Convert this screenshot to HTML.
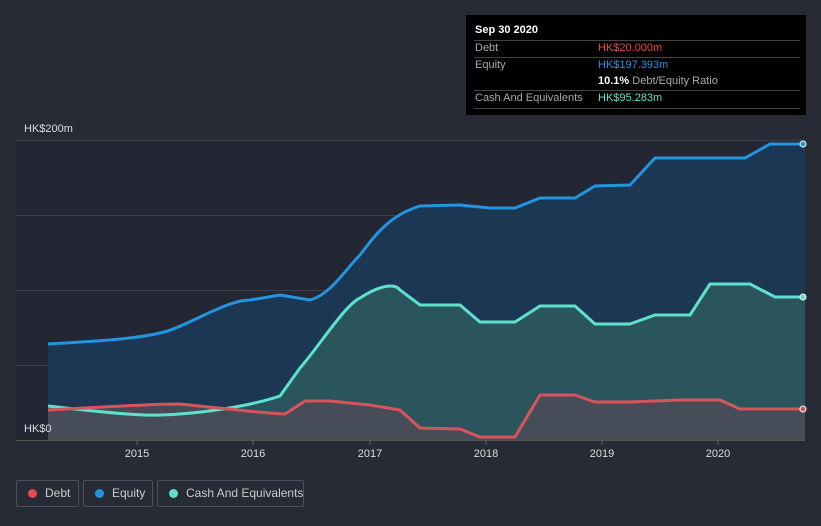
<!DOCTYPE html>
<html><head><style>
body{margin:0;width:821px;height:526px;background:#262b36;font-family:"Liberation Sans",sans-serif;overflow:hidden;position:relative}
.tt{position:absolute;left:466px;top:15px;width:340px;height:100px;background:#000;color:#fff;font-size:11px}
.tt .r{position:absolute;left:8px;right:6px;border-top:1px solid #444}
.lg{position:absolute;top:480px;height:27px;border:1px solid #4a505c;border-radius:2px;color:#ccc;font-size:12px;line-height:25px;box-sizing:border-box;white-space:nowrap}
.lg i{position:absolute;left:11px;top:8px;width:9px;height:9px;border-radius:50%}
</style></head><body>
<svg width="821" height="526" style="position:absolute;left:0;top:0">
<rect x="16" y="140" width="789" height="300" fill="#222733"/>
<g stroke="#3a404c" stroke-width="1">
<line x1="16" y1="140.5" x2="805" y2="140.5"/><line x1="16" y1="215.5" x2="805" y2="215.5"/><line x1="16" y1="290.5" x2="805" y2="290.5"/><line x1="16" y1="365.5" x2="805" y2="365.5"/><line x1="16" y1="440.5" x2="805" y2="440.5" stroke="#555"/>
</g>
<path d="M48,344 C80,342 130,340 160,333 C185,328 225,300 250,300 L280,295 L310,300 C330,295 345,270 360,255 C375,235 390,215 420,206 L460,205 L490,208 L515,208 L540,198 L575,198 L595,186 L630,185 L655,158 L745,158 L770,144 L805,144 L805,440 L48,440Z" fill="#1c3a56" opacity="0.9"/>
<path d="M48,406 C100,412 140,416 160,415 C200,414 250,406 280,396 L300,368 C320,345 345,305 360,298 C380,285 395,283 400,290 L420,305 L460,305 L480,322 L515,322 L540,306 L575,306 L595,324 L630,324 L655,315 L690,315 L710,284 L750,284 L775,297 L805,297 L805,440 L48,440Z" fill="#2d5a5f" opacity="0.85"/>
<path d="M48,410 C100,407 150,404 180,404 C220,408 260,413 285,414 L305,401 L330,401 L370,405 L400,410 L420,428 L460,429 L480,437 L515,437 L540,395 L575,395 L595,402 L630,402 L680,400 L720,400 L740,409 L805,409 L805,440 L48,440Z" fill="#4a4d58" opacity="0.9"/>
<path d="M48,344 C80,342 130,340 160,333 C185,328 225,300 250,300 L280,295 L310,300 C330,295 345,270 360,255 C375,235 390,215 420,206 L460,205 L490,208 L515,208 L540,198 L575,198 L595,186 L630,185 L655,158 L745,158 L770,144 L805,144" fill="none" stroke="#2394e0" stroke-width="3"/>
<path d="M48,406 C100,412 140,416 160,415 C200,414 250,406 280,396 L300,368 C320,345 345,305 360,298 C380,285 395,283 400,290 L420,305 L460,305 L480,322 L515,322 L540,306 L575,306 L595,324 L630,324 L655,315 L690,315 L710,284 L750,284 L775,297 L805,297" fill="none" stroke="#5ee0cc" stroke-width="3"/>
<path d="M48,410 C100,407 150,404 180,404 C220,408 260,413 285,414 L305,401 L330,401 L370,405 L400,410 L420,428 L460,429 L480,437 L515,437 L540,395 L575,395 L595,402 L630,402 L680,400 L720,400 L740,409 L805,409" fill="none" stroke="#d9535b" stroke-width="3"/>
<circle cx="803" cy="144" r="3" fill="#2394e0" stroke="#fff" stroke-width="1"/>
<circle cx="803" cy="297" r="3" fill="#5ee0cc" stroke="#fff" stroke-width="1"/>
<circle cx="803" cy="409" r="3" fill="#d9535b" stroke="#fff" stroke-width="1"/>
<g stroke="#666"><line x1="137" y1="440" x2="137" y2="445"/><line x1="253" y1="440" x2="253" y2="445"/><line x1="370" y1="440" x2="370" y2="445"/><line x1="486" y1="440" x2="486" y2="445"/><line x1="602" y1="440" x2="602" y2="445"/><line x1="718" y1="440" x2="718" y2="445"/></g>
<g fill="#ddd" font-size="11" text-anchor="middle"><text x="137" y="457">2015</text><text x="253" y="457">2016</text><text x="370" y="457">2017</text><text x="486" y="457">2018</text><text x="602" y="457">2019</text><text x="718" y="457">2020</text></g>
<text x="24" y="132" fill="#ddd" font-size="11">HK$200m</text>
<text x="24" y="432" fill="#ddd" font-size="11">HK$0</text>
</svg>
<div class="tt">
<div style="position:absolute;left:9px;top:9px;font-weight:bold">Sep 30 2020</div>
<div class="r" style="top:25px"></div>
<div style="position:absolute;left:9px;top:27px;color:#aaa">Debt</div><div style="position:absolute;left:132px;top:27px;color:#e8474f">HK$20.000m</div>
<div class="r" style="top:42px"></div>
<div style="position:absolute;left:9px;top:44px;color:#aaa">Equity</div><div style="position:absolute;left:132px;top:44px;color:#2394e0">HK$197.393m</div>
<div style="position:absolute;left:132px;top:60px;color:#aaa"><b style="color:#fff">10.1%</b> Debt/Equity Ratio</div>
<div class="r" style="top:75px"></div>
<div style="position:absolute;left:9px;top:77px;color:#aaa">Cash And Equivalents</div><div style="position:absolute;left:132px;top:77px;color:#5ee0cc">HK$95.283m</div>
<div class="r" style="top:93px"></div>
</div>
<div class="lg" style="left:16px;width:63px"><i style="background:#e8474f"></i><span style="position:absolute;left:28px">Debt</span></div>
<div class="lg" style="left:83px;width:70px"><i style="background:#2394e0"></i><span style="position:absolute;left:28px">Equity</span></div>
<div class="lg" style="left:157px;width:147px"><i style="background:#5ee0cc"></i><span style="position:absolute;left:28px">Cash And Equivalents</span></div>
</body></html>
